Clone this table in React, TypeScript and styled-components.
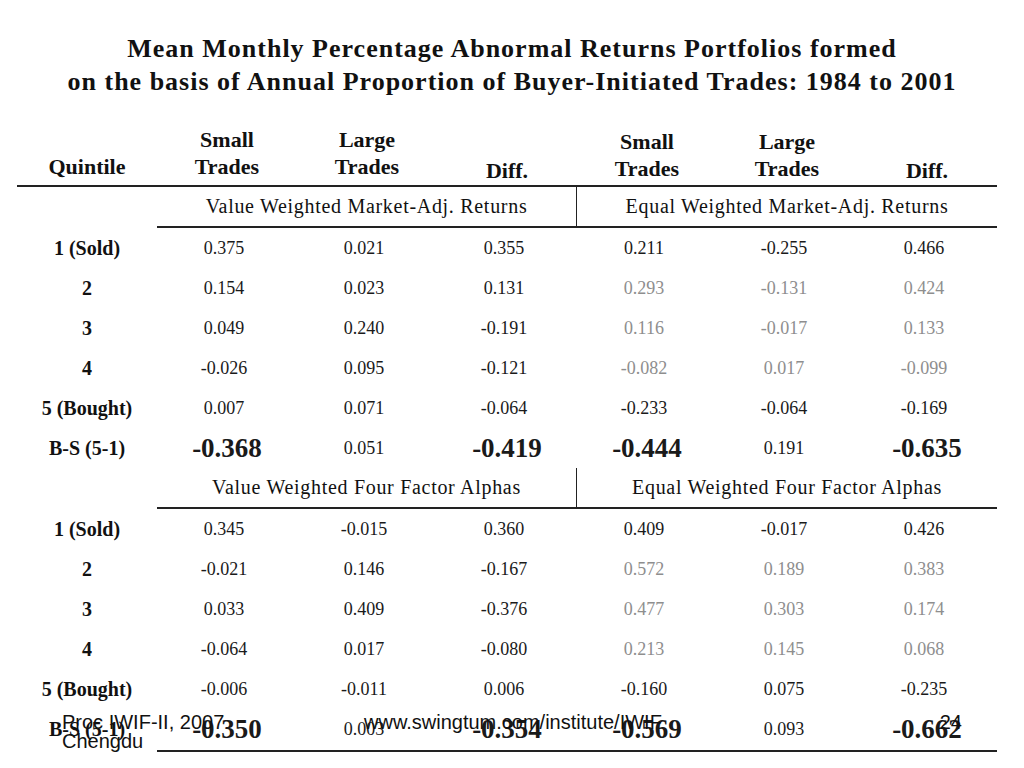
import React from "react";
import styled, { createGlobalStyle } from "styled-components";

const Global = createGlobalStyle`
  html, body { margin: 0; padding: 0; background: #fff; }
  body { font-family: "Liberation Serif", "Times New Roman", serif; color: #111; }
`;

const Page = styled.div`
  position: relative;
  width: 1024px;
  height: 768px;
  overflow: hidden;
`;

const Title = styled.h1`
  margin: 0;
  padding-top: 32px;
  font-size: 26px;
  line-height: 33px;
  font-weight: bold;
  text-align: center;
  letter-spacing: 1px;
`;

const Grid = styled.div`
  display: grid;
  grid-template-columns: 140px repeat(6, 140px);
  width: 980px;
  margin-left: 17px;
`;

const HeadCell = styled.div<{ $shift?: number }>`
  border-bottom: 2px solid #222;
  display: flex;
  flex-direction: column;
  justify-content: flex-end;
  align-items: center;
  padding-bottom: ${(p) => 5 - (p.$shift ?? 0)}px;
  box-sizing: border-box;
  height: 89px;
  font-size: 22px;
  font-weight: bold;
  line-height: 27px;
  text-align: center;
`;

const Blank = styled.div``;

const Section = styled.div<{ $divider?: boolean }>`
  grid-column: span 3;
  height: 41px;
  box-sizing: border-box;
  border-bottom: 2px solid #222;
  border-right: ${(p) => (p.$divider ? "1.5px solid #222" : "none")};
  display: flex;
  align-items: center;
  justify-content: center;
  font-size: 20px;
  letter-spacing: 0.7px;
`;

const RowLabel = styled.div`
  height: 40px;
  display: flex;
  align-items: center;
  justify-content: center;
  font-size: 20px;
  font-weight: bold;
`;

const Value = styled.div<{ $gray?: boolean; $strong?: boolean }>`
  height: 40px;
  display: flex;
  align-items: center;
  justify-content: center;
  font-size: ${(p) => (p.$strong ? "27px" : "18px")};
  font-weight: ${(p) => (p.$strong ? "bold" : "normal")};
  color: ${(p) => (p.$gray ? "#8e8e8e" : "#1a1a1a")};
  padding-right: ${(p) => (p.$strong ? "0" : "6px")};
  box-sizing: border-box;
`;

const LastRowSpacer = styled.div`
  grid-column: 2 / span 6;
  height: 1px;
  border-bottom: 2px solid #222;
`;

const Footer = styled.div`
  position: absolute;
  left: 0;
  right: 0;
  top: 713px;
  font-family: "Liberation Sans", Arial, sans-serif;
  font-size: 20px;
  line-height: 19px;
  color: #111;
`;

const FootLeft = styled.div`
  position: absolute;
  left: 62px;
`;

const FootCenter = styled.div`
  position: absolute;
  left: 364px;
`;

const FootRight = styled.div`
  position: absolute;
  right: 62px;
`;

type Row = { label: string; vals: string[]; strong?: boolean };

const sec1: Row[] = [
  { label: "1 (Sold)", vals: ["0.375", "0.021", "0.355", "0.211", "-0.255", "0.466"] },
  { label: "2", vals: ["0.154", "0.023", "0.131", "0.293", "-0.131", "0.424"] },
  { label: "3", vals: ["0.049", "0.240", "-0.191", "0.116", "-0.017", "0.133"] },
  { label: "4", vals: ["-0.026", "0.095", "-0.121", "-0.082", "0.017", "-0.099"] },
  { label: "5 (Bought)", vals: ["0.007", "0.071", "-0.064", "-0.233", "-0.064", "-0.169"] },
  { label: "B-S (5-1)", vals: ["-0.368", "0.051", "-0.419", "-0.444", "0.191", "-0.635"], strong: true },
];

const sec2: Row[] = [
  { label: "1 (Sold)", vals: ["0.345", "-0.015", "0.360", "0.409", "-0.017", "0.426"] },
  { label: "2", vals: ["-0.021", "0.146", "-0.167", "0.572", "0.189", "0.383"] },
  { label: "3", vals: ["0.033", "0.409", "-0.376", "0.477", "0.303", "0.174"] },
  { label: "4", vals: ["-0.064", "0.017", "-0.080", "0.213", "0.145", "0.068"] },
  { label: "5 (Bought)", vals: ["-0.006", "-0.011", "0.006", "-0.160", "0.075", "-0.235"] },
  { label: "B-S (5-1)", vals: ["-0.350", "0.003", "-0.354", "-0.569", "0.093", "-0.662"], strong: true },
];

const grayRows = new Set(["2", "3", "4"]);

function Rows({ rows }: { rows: Row[] }) {
  return (
    <>
      {rows.map((r) => (
        <React.Fragment key={r.label}>
          <RowLabel>{r.label}</RowLabel>
          {r.vals.map((v, i) => (
            <Value
              key={i}
              $strong={r.strong && i !== 1 && i !== 4}
              $gray={grayRows.has(r.label) && i >= 3}
            >
              {v}
            </Value>
          ))}
        </React.Fragment>
      ))}
    </>
  );
}

export default function App() {
  return (
    <Page>
      <Global />
      <Title>
        Mean Monthly Percentage Abnormal Returns Portfolios formed
        <br />
        on the basis of Annual Proportion of Buyer-Initiated Trades: 1984 to 2001
      </Title>
      <Grid>
        <HeadCell>Quintile</HeadCell>
        <HeadCell>
          <span>Small</span>
          <span>Trades</span>
        </HeadCell>
        <HeadCell>
          <span>Large</span>
          <span>Trades</span>
        </HeadCell>
        <HeadCell $shift={4}>Diff.</HeadCell>
        <HeadCell $shift={2}>
          <span>Small</span>
          <span>Trades</span>
        </HeadCell>
        <HeadCell $shift={2}>
          <span>Large</span>
          <span>Trades</span>
        </HeadCell>
        <HeadCell $shift={4}>Diff.</HeadCell>

        <Blank />
        <Section $divider>Value Weighted Market-Adj. Returns</Section>
        <Section>Equal Weighted Market-Adj. Returns</Section>
        <Rows rows={sec1} />

        <Blank />
        <Section $divider>Value Weighted Four Factor Alphas</Section>
        <Section>Equal Weighted Four Factor Alphas</Section>
        <Rows rows={sec2} />
        <Blank />
        <LastRowSpacer />
      </Grid>
      <Footer>
        <FootLeft>
          Proc IWIF-II, 2007
          <br />
          Chengdu
        </FootLeft>
        <FootCenter>www.swingtum.com/institute/IWIF</FootCenter>
        <FootRight>24</FootRight>
      </Footer>
    </Page>
  );
}
